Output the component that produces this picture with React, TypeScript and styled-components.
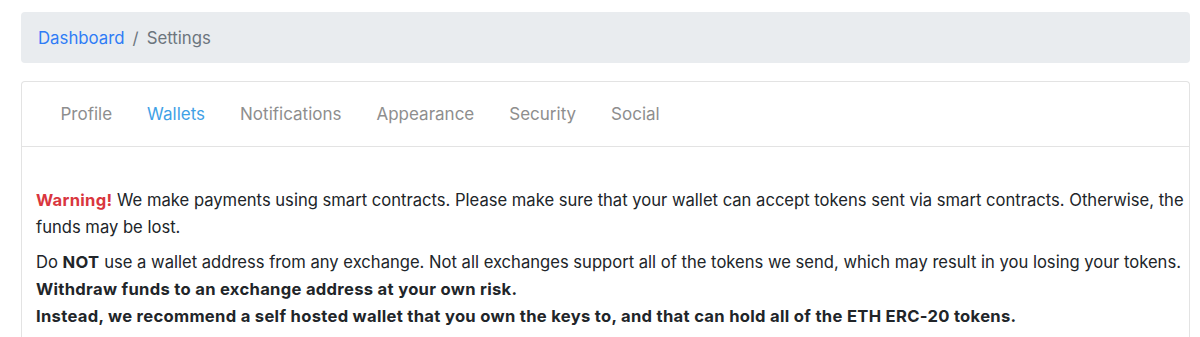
import styled, { createGlobalStyle } from 'styled-components'

const GlobalStyle = createGlobalStyle`
  * {
    box-sizing: border-box;
  }
  body {
    margin: 0;
    background: #fff;
    font-family: Inter, "Liberation Sans", Arial, sans-serif;
    color: #212529;
  }
`

const tabs = ['Profile', 'Wallets', 'Notifications', 'Appearance', 'Security', 'Social']

const App = () => {
  return (
    <>
      <GlobalStyle />
      <Page>
        <Breadcrumb>
          <CrumbLink href="#">Dashboard</CrumbLink>
          <CrumbDivider>/</CrumbDivider>
          <CrumbCurrent>Settings</CrumbCurrent>
        </Breadcrumb>
        <Card>
          <CardHeader>
            {tabs.map((tab) => (
              <Tab key={tab} $active={tab === 'Wallets'}>
                {tab}
              </Tab>
            ))}
          </CardHeader>
          <CardBody>
            <Paragraph>
              <Warning>Warning!</Warning> We make payments using smart contracts. Please make sure
              that your wallet can accept tokens sent via smart contracts. Otherwise, the funds may
              be lost.
            </Paragraph>
            <Paragraph>
              Do <strong>NOT</strong> use a wallet address from any exchange. Not all exchanges
              support all of the tokens we send, which may result in you losing your tokens.
              <br />
              <strong>Withdraw funds to an exchange address at your own risk.</strong>
              <br />
              <strong>
                Instead, we recommend a self hosted wallet that you own the keys to, and that can
                hold all of the ETH ERC-20 tokens.
              </strong>
            </Paragraph>
          </CardBody>
        </Card>
      </Page>
    </>
  )
}

export default App

const Page = styled.div`
  display: flex;
  flex-direction: column;
  gap: 18px;
  padding: 12px 10px 0 21px;
`

const Breadcrumb = styled.nav`
  display: flex;
  align-items: center;
  height: 51px;
  padding: 0 17px;
  background: #e9ecef;
  border-radius: 4px;
  font-size: 16.8px;
`

const CrumbLink = styled.a`
  color: #2f7cf6;
  text-decoration: none;
`

const CrumbDivider = styled.span`
  padding: 0 8px;
  color: #6c757d;
`

const CrumbCurrent = styled.span`
  color: #6c757d;
`

const Card = styled.div`
  border: 1px solid #e3e3e3;
  border-bottom: none;
  border-radius: 4px 4px 0 0;
  background: #fff;
`

const CardHeader = styled.div`
  display: flex;
  align-items: center;
  height: 65px;
  padding: 0 21px;
  border-bottom: 1px solid #e3e3e3;
`

const Tab = styled.a<{ $active?: boolean }>`
  padding: 0 17.5px;
  font-size: 17px;
  color: ${(p) => (p.$active ? '#3fa1e6' : '#8e8e8e')};
  cursor: pointer;
`

const CardBody = styled.div`
  padding: 40px 0 0 14px;
`

const Paragraph = styled.p`
  margin: 0 0 8px;
  font-size: 16.6px;
  line-height: 27px;
  color: #212529;

  strong {
    font-weight: 700;
    letter-spacing: 0.3px;
  }
`

const Warning = styled.strong`
  color: #d9363e;
`
